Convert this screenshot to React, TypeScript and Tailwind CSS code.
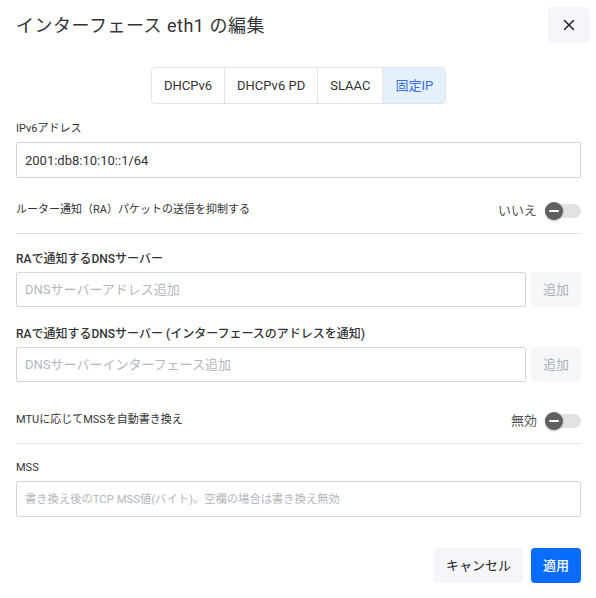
import { X } from "lucide-react";

const font = { fontFamily: '"Roboto", "Noto Sans CJK JP", sans-serif' };

function Toggle() {
	return (
		<span className="relative flex h-[18px] w-[36px] items-center">
			<span className="h-[14px] w-full rounded-full bg-[#e2e2e2]" />
			<span className="absolute left-0 top-0 flex h-[18px] w-[18px] items-center justify-center rounded-full bg-[#5f5f5f] shadow-[0_1px_2px_rgba(0,0,0,0.3)]">
				<span className="h-[2px] w-[10px] rounded bg-white" />
			</span>
		</span>
	);
}

function SwitchRow({ label, value }: { label: string; value: string }) {
	return (
		<div className="flex h-[46px] items-center justify-between border-b border-[#e3e3e3]">
			<span className="text-[11px] text-[#333]">{label}</span>
			<span className="flex items-center gap-[8px]">
				<span className="text-[13px] text-[#555]">{value}</span>
				<Toggle />
			</span>
		</div>
	);
}

function AddRow({ label, placeholder }: { label: string; placeholder: string }) {
	return (
		<div className="flex flex-col">
			<label className="mb-[4px] text-[12px] font-medium leading-[18px] text-[#333]">{label}</label>
			<div className="flex gap-[5px]">
				<input
					className="h-[35px] flex-1 rounded-[2px] border border-[#d3d6db] px-[8px] text-[13px] text-[#333] outline-none placeholder:text-[#b3b7bd]"
					placeholder={placeholder}
				/>
				<button className="h-[35px] w-[50px] rounded-[4px] bg-[#f6f7f9] text-[13px] text-[#a9b0ba]">
					追加
				</button>
			</div>
		</div>
	);
}

export default function App() {
	const modes = ["DHCPv6", "DHCPv6 PD", "SLAAC", "固定IP"];
	return (
		<div className="h-[598px] w-[596px] bg-white" style={font}>
			<div className="flex items-center justify-between pl-[16px] pr-[6px] pt-[7px]">
				<h2 className="text-[18px] font-normal tracking-[0.5px] text-[#333]">インターフェース eth1 の編集</h2>
				<button className="flex h-[36px] w-[42px] items-center justify-center rounded-[4px] bg-[#f5f6fa] text-[#222]">
					<X size={18} strokeWidth={2} />
				</button>
			</div>

			<div className="pl-[16px] pr-[15px]">
				<div className="mt-[24px] flex justify-center">
					<div className="flex h-[37px] overflow-hidden rounded-[4px] border border-[#e2e4e8]">
						{modes.map((m, i) => (
							<button
								key={m}
								className={
									i === 3
										? "bg-[#e4f1fd] px-[12px] text-[13px] text-[#3c6fe6]"
										: "border-r border-[#e2e4e8] px-[12px] text-[13px] text-[#333]"
								}
							>
								{m}
							</button>
						))}
					</div>
				</div>

				<div className="mt-[16px] flex flex-col">
					<label className="mb-[4px] text-[11px] leading-[18px] text-[#333]">IPv6アドレス</label>
					<input
						className="h-[36px] rounded-[2px] border border-[#d3d6db] px-[8px] text-[13px] text-[#333] outline-none"
						defaultValue="2001:db8:10:10::1/64"
					/>
				</div>

				<div className="mt-[10px]">
					<SwitchRow label="ルーター通知（RA）パケットの送信を抑制する" value="いいえ" />
				</div>

				<div className="mt-[16px]">
					<AddRow label="RAで通知するDNSサーバー" placeholder="DNSサーバーアドレス追加" />
				</div>
				<div className="mt-[18px]">
					<AddRow
						label="RAで通知するDNSサーバー (インターフェースのアドレスを通知)"
						placeholder="DNSサーバーインターフェース追加"
					/>
				</div>

				<div className="mt-[16px]">
					<SwitchRow label="MTUに応じてMSSを自動書き換え" value="無効" />
				</div>

				<div className="mt-[15px] flex flex-col">
					<label className="mb-[4px] text-[11px] leading-[18px] text-[#333]">MSS</label>
					<input
						className="h-[36px] rounded-[2px] border border-[#d3d6db] px-[8px] text-[11.3px] text-[#333] outline-none placeholder:text-[#b3b7bd]"
						placeholder="書き換え後のTCP MSS値(バイト)。空欄の場合は書き換え無効"
					/>
				</div>

				<div className="mt-[31px] flex justify-end gap-[8px]">
					<button className="h-[35px] w-[89px] rounded-[4px] bg-[#f5f6fa] text-[13px] text-[#222]">
						キャンセル
					</button>
					<button className="h-[35px] w-[50px] rounded-[4px] bg-[#0a6cff] text-[13px] font-medium text-white">
						適用
					</button>
				</div>
			</div>
		</div>
	);
}
